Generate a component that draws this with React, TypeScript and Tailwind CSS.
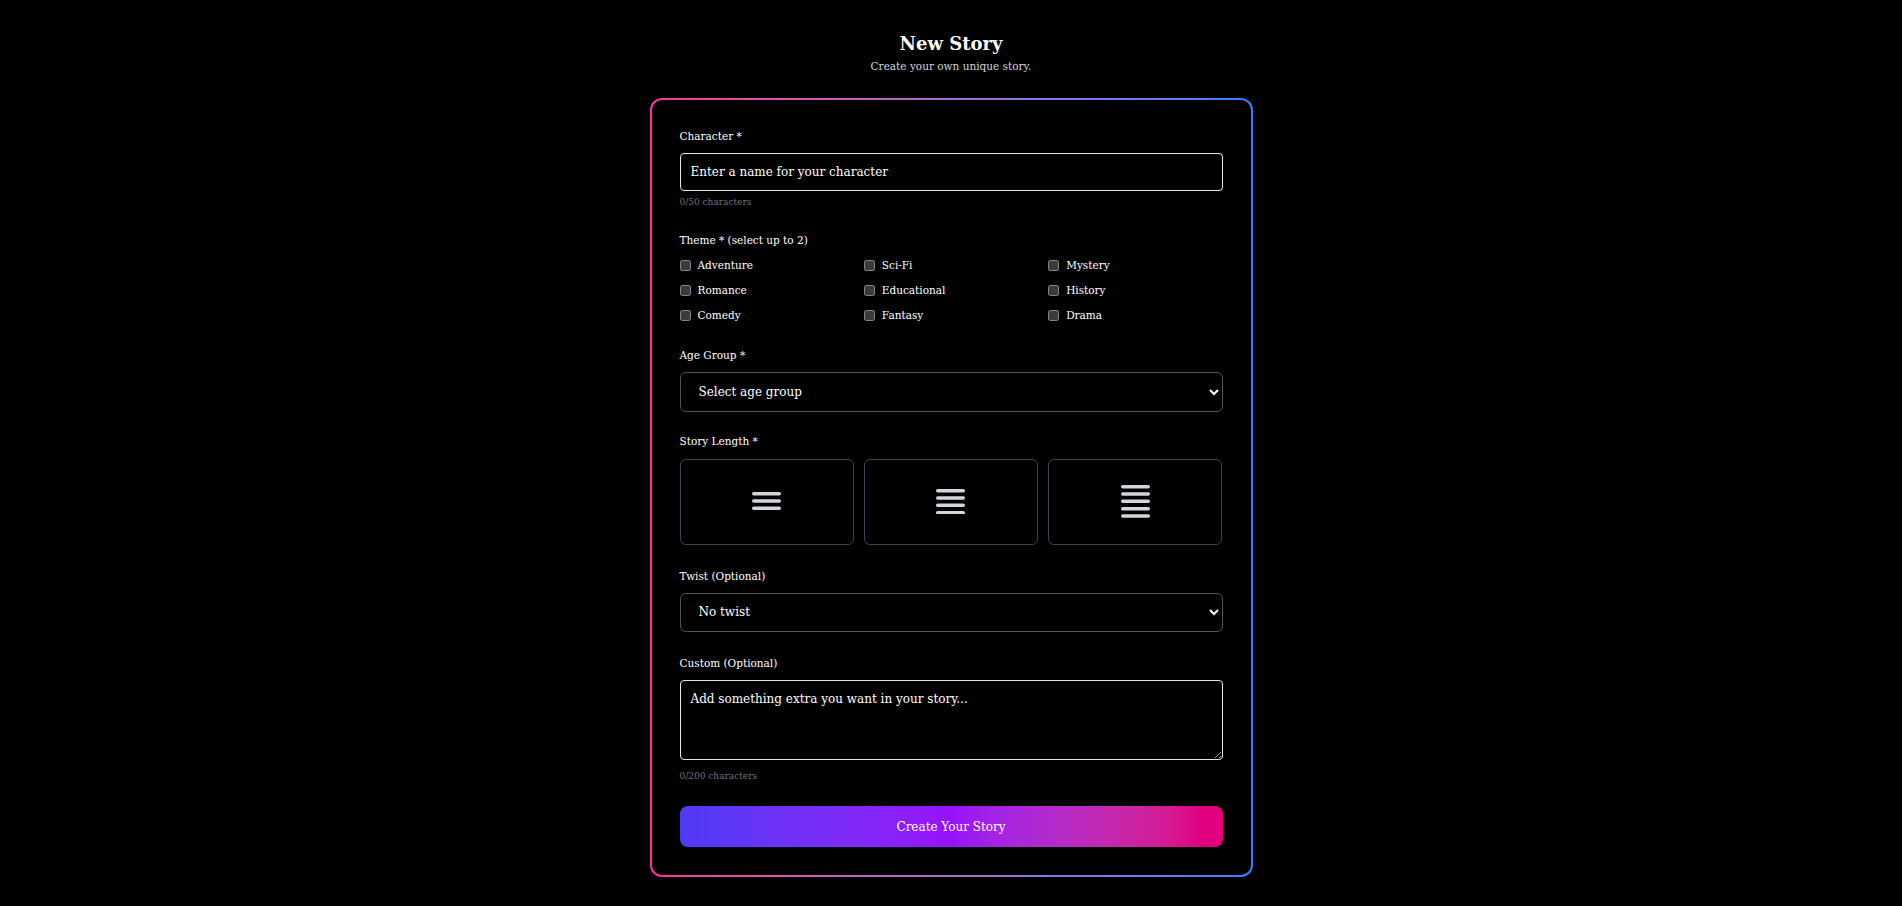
import { useState } from 'react'

// ---------------------------------------------------------------------------
// Story length icon — stacked rounded bars, more bars = longer story
// ---------------------------------------------------------------------------

function LengthIcon({ bars }: { bars: number }) {
  const pitch = 7.3
  const height = (bars - 1) * pitch + 3.5
  return (
    <svg width="29" height={height} viewBox={`0 0 29 ${height}`} className="text-gray-300">
      {Array.from({ length: bars }).map((_, i) => (
        <line
          key={i}
          x1="1.75"
          x2="27.25"
          y1={1.75 + i * pitch}
          y2={1.75 + i * pitch}
          stroke="currentColor"
          strokeWidth="3.5"
          strokeLinecap="round"
        />
      ))}
    </svg>
  )
}

function Label({ children }: { children: React.ReactNode }) {
  return <p className="text-[10.5px] leading-[15px] text-white">{children}</p>
}

const THEMES = [
  'Adventure', 'Sci-Fi', 'Mystery',
  'Romance', 'Educational', 'History',
  'Comedy', 'Fantasy', 'Drama',
]

export default function App() {
  const [name, setName] = useState('')
  const [custom, setCustom] = useState('')
  const [themes, setThemes] = useState<string[]>([])

  const toggleTheme = (t: string) => {
    setThemes(prev =>
      prev.includes(t) ? prev.filter(x => x !== t) : prev.length < 2 ? [...prev, t] : prev
    )
  }

  return (
    <div className="min-h-screen bg-black font-['DejaVu_Serif',serif] text-white [color-scheme:dark] pt-[30px] pb-[29px]">

      {/* Header */}
      <div className="text-center">
        <h1 className="text-[18px] leading-[27px] font-bold text-white">New Story</h1>
        <p className="mt-[2px] text-[10.5px] leading-[15px] text-gray-300">Create your own unique story.</p>
      </div>

      {/* Card with gradient border */}
      <div className="mx-auto mt-[24px] w-[603px] rounded-[12px] bg-gradient-to-r from-pink-500 to-blue-500 p-[2px]">
        <form className="rounded-[10px] bg-black px-[28px] pt-[29px] pb-[28px]" onSubmit={e => e.preventDefault()}>

          {/* Character */}
          <div>
            <Label>Character *</Label>
            <input
              value={name}
              maxLength={50}
              onChange={e => setName(e.target.value)}
              placeholder="Enter a name for your character"
              className="mt-[9px] block h-[38px] w-full rounded-[4px] border border-gray-200 bg-black px-[10px] text-[12px] text-white outline-none placeholder:text-white"
            />
            <p className="mt-[5px] text-[9px] leading-[13.5px] text-gray-500">{name.length}/50 characters</p>
          </div>

          {/* Theme */}
          <div className="mt-[23px]">
            <Label>Theme * (select up to 2)</Label>
            <div className="mt-[10px] grid grid-cols-3 gap-x-[10px] gap-y-[10px]">
              {THEMES.map(t => (
                <label key={t} className="flex items-center gap-[7px] text-[10.5px] leading-[15px] text-white">
                  <input
                    type="checkbox"
                    checked={themes.includes(t)}
                    onChange={() => toggleTheme(t)}
                    className="m-0 h-[11px] w-[11px]"
                  />
                  {t}
                </label>
              ))}
            </div>
          </div>

          {/* Age group */}
          <div className="mt-[25px]">
            <Label>Age Group *</Label>
            <select className="mt-[9px] block h-[40px] w-full rounded-[6px] border border-neutral-600 bg-black pl-[14px] pr-[6px] text-[12px] text-white outline-none">
              <option value="">Select age group</option>
              <option>Ages 3-5</option>
              <option>Ages 6-8</option>
              <option>Ages 9-12</option>
              <option>Teens</option>
              <option>Adults</option>
            </select>
          </div>

          {/* Story length */}
          <div className="mt-[22px]">
            <Label>Story Length *</Label>
            <div className="mt-[10px] grid grid-cols-3 gap-[10px]">
              {[3, 4, 5].map(n => (
                <button
                  key={n}
                  type="button"
                  className="flex h-[86px] items-center justify-center rounded-[6px] border border-[#3b4352] bg-black"
                >
                  <LengthIcon bars={n} />
                </button>
              ))}
            </div>
          </div>

          {/* Twist */}
          <div className="mt-[24px]">
            <Label>Twist (Optional)</Label>
            <select className="mt-[9px] block h-[39px] w-full rounded-[6px] border border-neutral-600 bg-black pl-[14px] pr-[6px] text-[12px] text-white outline-none">
              <option>No twist</option>
              <option>Plot twist</option>
              <option>Surprise ending</option>
            </select>
          </div>

          {/* Custom */}
          <div className="mt-[24px]">
            <Label>Custom (Optional)</Label>
            <textarea
              value={custom}
              maxLength={200}
              onChange={e => setCustom(e.target.value)}
              placeholder="Add something extra you want in your story..."
              className="mt-[9px] block h-[80px] w-full rounded-[4px] border border-gray-200 bg-black px-[10px] py-[9px] text-[12px] leading-[18px] text-white outline-none placeholder:text-white"
            />
            <p className="mt-[10px] text-[9px] leading-[13.5px] text-gray-500">{custom.length}/200 characters</p>
          </div>

          <button
            type="submit"
            className="mt-[23px] block h-[41px] w-full rounded-lg bg-gradient-to-r from-indigo-600 via-purple-600 to-pink-600 text-[12px] text-white"
          >
            Create Your Story
          </button>
        </form>
      </div>
    </div>
  )
}
